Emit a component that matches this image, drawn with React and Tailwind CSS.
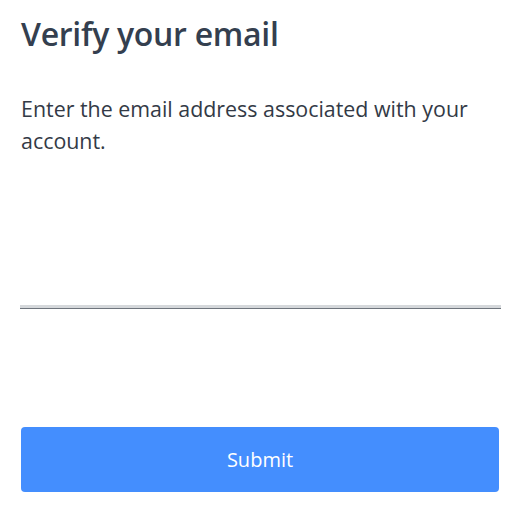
export default function App() {
  return (
    <div className="min-h-screen bg-white px-[21px] pt-[6px] text-[#343f4f]" style={{ fontFamily: '"Open Sans", Lato, sans-serif' }}>
      <h1 className="text-[32px] leading-[56px] font-semibold tracking-[-0.3px]">Verify your email</h1>
      <p className="mt-[31px] text-[21.4px] leading-[32px] text-[#333a46]">
        Enter the email address associated with your account.
      </p>
      <div className="mt-[120px] -ml-px -mr-[4px]">
        <input
          type="email"
          className="w-full h-[32px] bg-white outline-none border-b border-[#6f757d]"
          style={{ boxShadow: 'inset 0 -3px 0 #d5d8db' }}
        />
      </div>
      <button
        type="button"
        className="mt-[118px] w-[478px] h-[65px] rounded-[4px] bg-[#448efe] text-white text-[20px]"
      >
        Submit
      </button>
    </div>
  );
}
